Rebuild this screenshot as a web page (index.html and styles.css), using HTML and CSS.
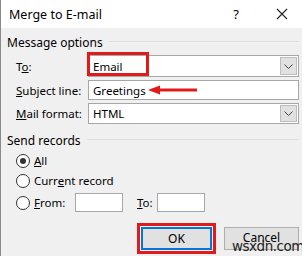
FILE: index.html
```html
<!DOCTYPE html>
<html>
<head>
<meta charset="utf-8">
<link rel="stylesheet" href="styles.css">
</head>
<body>
<div class="dialog">
  <div class="titlebar">
    <span class="title">Merge to E-mail</span>
    <span class="help">?</span>
    <span class="close">
      <svg width="12" height="12" viewBox="0 0 12 12"><path d="M1 1 L11 11 M11 1 L1 11" stroke="#222" stroke-width="1.1" fill="none"/></svg>
    </span>
  </div>
  <div class="body">
    <div class="group-head"><span>Message options</span><i class="rule"></i></div>
    <div class="fields">
      <div class="row row-to">
        <label class="lbl">T<u>o</u>:</label>
        <div class="combo"><span class="val">Email</span><span class="drop"><svg width="9" height="5" viewBox="0 0 9 5"><path d="M0.5 0.5 L4.5 4.5 L8.5 0.5" stroke="#444" fill="none"/></svg></span></div>
        <div class="mark mark-email"></div>
      </div>
      <div class="row row-subj">
        <label class="lbl"><u>S</u>ubject line:</label>
        <div class="input"><span class="val">Greetings</span></div>
        <svg class="arrow" width="50" height="10" viewBox="0 0 50 10"><path d="M10 5 H49" stroke="#e01b1b" stroke-width="3"/><path d="M0 5 L12 0.5 L12 9.5 Z" fill="#e01b1b"/></svg>
      </div>
      <div class="row row-fmt">
        <label class="lbl"><u>M</u>ail format:</label>
        <div class="combo"><span class="val">HTML</span><span class="drop"><svg width="9" height="5" viewBox="0 0 9 5"><path d="M0.5 0.5 L4.5 4.5 L8.5 0.5" stroke="#444" fill="none"/></svg></span></div>
      </div>
    </div>
    <div class="group-head group-send"><span>Send records</span><i class="rule"></i></div>
    <div class="radios">
      <div class="radio-row"><span class="radio on"></span><span><u>A</u>ll</span></div>
      <div class="radio-row"><span class="radio"></span><span>Curr<u>e</u>nt record</span></div>
      <div class="radio-row from-row">
        <span class="radio"></span><span class="from-lbl"><u>F</u>rom:</span>
        <span class="box"></span>
        <span class="to-lbl"><u>T</u>o:</span>
        <span class="box"></span>
      </div>
    </div>
    <div class="buttons">
      <div class="btn-wrap">
        <button class="btn ok">OK</button>
        <div class="mark mark-ok"></div>
      </div>
      <button class="btn cancel"><span class="cancel-txt">Cancel</span></button>
    </div>
  </div>
  <div class="watermark">wsxdn.com</div>
</div>
</body>
</html>
```
FILE: styles.css
```css
* { box-sizing: border-box; }
html, body { margin: 0; padding: 0; }
body {
  width: 302px;
  height: 256px;
  overflow: hidden;
  font-family: "Noto Sans", "Open Sans", sans-serif;
  font-size: 11.5px;
  color: #000;
}
u { text-decoration: underline; text-underline-offset: 1px; }
.dialog {
  position: relative;
  width: 302px;
  height: 256px;
  overflow: hidden;
  background: #f0f0f0;
  border-left: 1px solid #8a8a8a;
}
.titlebar {
  height: 28px;
  background: #fff;
  display: flex;
  align-items: center;
  padding-left: 8px;
}
.title { font-size: 12.5px; flex: 1; }
.help { width: 20px; font-size: 13px; margin-right: 26px; text-align: center; }
.close { width: 20px; margin-right: 10px; display: flex; justify-content: center; }
.body { padding: 0 3px 0 6px; }
.group-head {
  display: flex;
  align-items: center;
  height: 28px;
  font-size: 12px;
}
.group-head .rule {
  flex: 1;
  height: 1px;
  background: #dcdcdc;
  margin-left: 6px;
  margin-top: -2px;
}
.fields { display: flex; flex-direction: column; gap: 3px; margin-top: -1px; }
.row {
  position: relative;
  display: flex;
  align-items: center;
}
.lbl { width: 81px; padding-left: 9px; font-size: 11.5px; }
.combo, .input {
  flex: 1;
  display: flex;
  align-items: center;
  background: #fff;
  border: 1px solid #a7a7a7;
}
.row-to .combo { height: 22px; }
.row-subj .input { height: 20px; }
.row-fmt .combo { height: 21px; }
.val { flex: 1; padding-left: 4px; font-size: 11.5px; }
.drop {
  width: 17px;
  align-self: stretch;
  margin: 1px;
  background: #e1e1e1;
  border: 1px solid #bdbdbd;
  display: flex;
  align-items: center;
  justify-content: center;
}
.mark {
  position: absolute;
  border: 3px solid #e01b1b;
}
.mark-email { left: 80px; top: -3px; width: 62px; height: 24px; }
.arrow { position: absolute; left: 141px; top: 5px; }
.group-send { margin-top: 2px; }
.radios { display: flex; flex-direction: column; gap: 5px; padding-left: 9px; margin-top: -1px; }
.radio-row { display: flex; align-items: center; height: 15px; font-size: 11.5px; }
.radio {
  width: 14px; height: 14px;
  border-radius: 50%;
  border: 1px solid #333;
  background: #fff;
  margin-right: 4px;
  position: relative;
}
.radio.on::after {
  content: "";
  position: absolute;
  left: 3px; top: 3px;
  width: 6px; height: 6px;
  border-radius: 50%;
  background: #333;
}
.from-row { height: 19px; }
.from-lbl { width: 41px; }
.box {
  width: 48px; height: 19px;
  background: #fff;
  border: 1px solid #a7a7a7;
}
.to-lbl { width: 34px; padding-left: 14px; }
.buttons {
  display: flex;
  justify-content: flex-end;
  gap: 12px;
  margin-top: 15px;
  padding-right: 0;
}
.btn-wrap { position: relative; }
.btn {
  font-family: inherit;
  font-size: 12px;
  width: 71px;
  height: 23px;
  background: #e1e1e1;
  border: 1px solid #adadad;
  padding: 0;
  color: #000;
}
.btn.ok { border: 2px solid #0078d7; display: block; }
.btn.cancel { width: 75px; display: flex; justify-content: center; align-items: flex-start; padding-top: 1px; }
.mark-ok { left: -4px; top: -4px; width: 79px; height: 31px; }
.watermark {
  position: absolute;
  left: 231px;
  top: 238px;
  font-family: "DejaVu Sans", sans-serif;
  font-size: 13.5px;
  line-height: 16px;
  color: #222;
  letter-spacing: -0.5px;
}
```
